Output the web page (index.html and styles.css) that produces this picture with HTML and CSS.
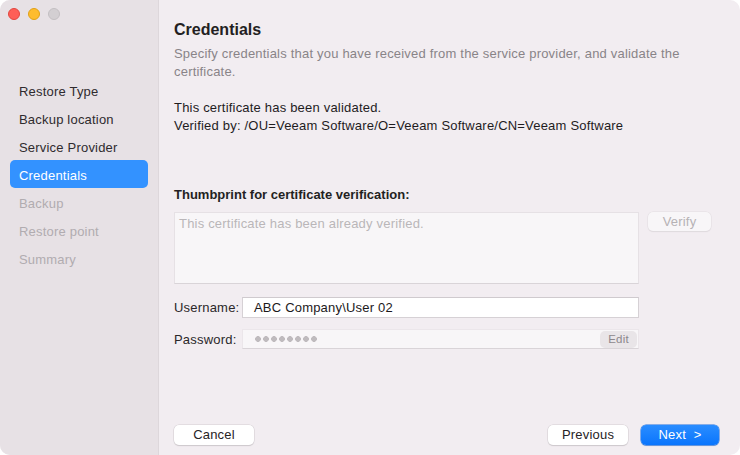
FILE: index.html
```html
<!DOCTYPE html>
<html lang="en">

<head>
    <meta charset="UTF-8">
    <meta name="viewport" content="width=device-width, initial-scale=1.0">
    <title>Credentials</title>
    <link rel="stylesheet" href="styles.css">
</head>

<body>

    <div class="window">
        <div class="sidebar">
            <div class="lights">
                <span class="light red"></span>
                <span class="light yellow"></span>
                <span class="light gray"></span>
            </div>
            <ul class="steps">
                <li>Restore Type</li>
                <li>Backup location</li>
                <li>Service Provider</li>
                <li class="on">Credentials</li>
                <li class="off">Backup</li>
                <li class="off">Restore point</li>
                <li class="off">Summary</li>
            </ul>
        </div>

        <div class="main">
            <h1 class="title">Credentials</h1>
            <p class="desc">Specify credentials that you have received from the service provider, and validate the certificate.</p>

            <p class="status">This certificate has been validated.<br>Verified by: /OU=Veeam Software/O=Veeam Software/CN=Veeam Software</p>

            <div class="label-strong">Thumbprint for certificate verification:</div>
            <div class="thumb-row">
                <div class="thumb">This certificate has been already verified.</div>
                <span class="btn btn-small disabled">Verify</span>
            </div>

            <div class="field field-user">
                <span class="field-label">Username:</span>
                <div class="input">ABC Company\User 02</div>
            </div>
            <div class="field field-pass">
                <span class="field-label">Password:</span>
                <div class="input input-off">
                    <span class="dots" title="password"></span>
                    <span class="edit">Edit</span>
                </div>
            </div>

            <div class="footer">
                <span class="btn">Cancel</span>
                <span class="spacer"></span>
                <span class="btn">Previous</span>
                <span class="btn btn-blue">Next &nbsp;&gt;</span>
            </div>
        </div>
    </div>

</body>

</html>
```

FILE: styles.css
```css
/* reset START */
* {
    margin: 0;
    padding: 0;
    box-sizing: border-box;
}

html,
body {
    width: 740px;
    height: 455px;
    background-color: #ffffff;
    overflow: hidden;
}

body {
    font-family: "Liberation Sans", Arial, sans-serif;
    font-size: 13px;
    letter-spacing: 0.2px;
    color: #242124;
}

ul {
    list-style: none;
}

/* reset END */

/* window START */
.window {
    width: 740px;
    height: 455px;
    display: flex;
    border-radius: 10px;
    overflow: hidden;
    background-color: #f2edf1;
}

/* window END */

/* sidebar START */
.sidebar {
    width: 159px;
    flex-shrink: 0;
    background-color: #e7e1e5;
    border-right: 1px solid #ddd7db;
    padding-top: 8px;
}

.lights {
    display: flex;
    gap: 8px;
    padding-left: 8px;
    height: 12px;
}

.light {
    width: 12px;
    height: 12px;
    border-radius: 50%;
    display: inline-block;
}

.red {
    background-color: #fe5f57;
    border: 1px solid #e2463f;
}

.yellow {
    background-color: #febc2e;
    border: 1px solid #e1a116;
}

.gray {
    background-color: #d3cfd2;
    border: 1px solid #c3bfc2;
}

.steps {
    margin-top: 56px;
}

.steps li {
    height: 28px;
    line-height: 31px;
    margin: 0 10px;
    padding-left: 9px;
    border-radius: 5px;
    color: #2f2b2e;
}

.steps li.on {
    background-color: #3392ff;
    color: #ffffff;
}

.steps li.off {
    color: #b1acb0;
}

/* sidebar END */

/* main START */
.main {
    flex: 1;
    display: flex;
    flex-direction: column;
    padding: 20px 21px 10px 15px;
}

.title {
    font-size: 16px;
    line-height: 20px;
    font-weight: bold;
    letter-spacing: 0;
    color: #231f22;
}

.desc {
    margin-top: 5px;
    line-height: 18px;
    color: #898488;
    padding-right: 20px;
}

.status {
    margin-top: 18px;
    line-height: 18px;
    color: #1f1c1e;
}

.label-strong {
    margin-top: 51px;
    line-height: 18px;
    font-weight: bold;
    letter-spacing: 0;
    color: #231f22;
}

.thumb-row {
    margin-top: 8px;
    display: flex;
    align-items: flex-start;
    gap: 9px;
}

.thumb {
    width: 465px;
    height: 72px;
    background-color: #f8f6f8;
    border: 1px solid #e6e1e5;
    border-bottom-color: #d9d4d8;
    padding: 3px 4px;
    color: #bab6b9;
    line-height: 16px;
}

/* main END */

/* fields START */
.field {
    display: flex;
    align-items: center;
}

.field-user {
    margin-top: 13px;
}

.field-pass {
    margin-top: 11px;
}

.field-label {
    width: 68px;
    color: #2b282a;
}

.input {
    width: 397px;
    height: 21px;
    line-height: 19px;
    background-color: #ffffff;
    border: 1px solid #d6d1d5;
    border-top-color: #cfcace;
    padding-left: 11px;
    color: #1c191b;
}

.input-off {
    height: 20px;
    display: flex;
    align-items: center;
    justify-content: space-between;
    background-color: #f8f6f8;
    border-color: #ebe6ea;
    border-bottom-color: #d9d4d8;
    padding-left: 11px;
    padding-right: 1px;
}

.dots {
    display: block;
    width: 64px;
    height: 6px;
    background: radial-gradient(circle, #bfbbbe 2.6px, transparent 3.1px) 0 0 / 8px 6px repeat-x;
}

.edit {
    width: 37px;
    height: 17px;
    line-height: 17px;
    text-align: center;
    border-radius: 5px;
    background-color: #e9e5e8;
    color: #8d888c;
    font-size: 11.5px;
}

/* fields END */

/* buttons START */
.btn {
    display: inline-block;
    width: 80px;
    height: 20px;
    line-height: 20px;
    text-align: center;
    background-color: #ffffff;
    border-radius: 5px;
    box-shadow: 0 0 0 0.5px #d3ced2, 0 1px 1px #c9c4c8;
    color: #262325;
}

.btn-small {
    width: 63px;
    height: 19px;
    line-height: 19px;
}

.btn.disabled {
    background-color: #f8f6f8;
    color: #b6b2b5;
    box-shadow: 0 0 0 0.5px #e2dde1, 0 1px 1px #dcd7db;
}

.btn-blue {
    width: 78px;
    color: #ffffff;
    background: linear-gradient(#2a8dff, #0a75fd);
    box-shadow: 0 0 0 0.5px #1a6fe0, 0 1px 1px #a9b9d8;
    margin-left: 13px;
}

.footer {
    margin-top: auto;
    display: flex;
    align-items: center;
}

.spacer {
    flex: 1;
}

/* buttons END */
```
